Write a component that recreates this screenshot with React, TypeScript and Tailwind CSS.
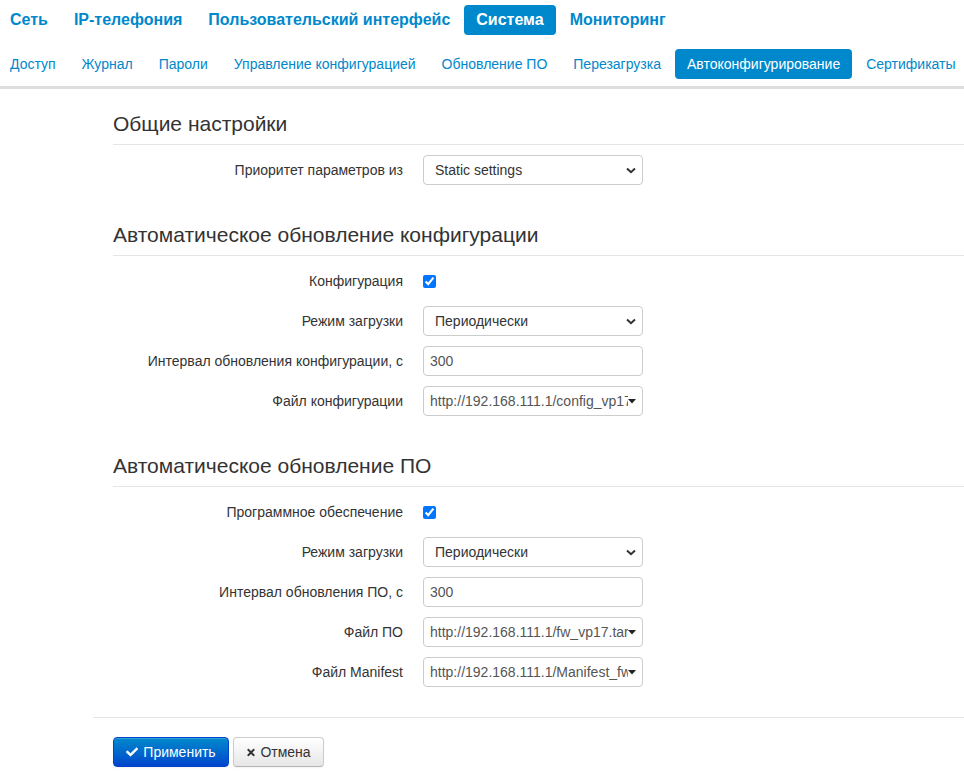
import { FaCheck, FaTimes } from "react-icons/fa";

const TOP_NAV = ["Сеть", "IP-телефония", "Пользовательский интерфейс", "Система", "Мониторинг"];
const SUB_NAV = [
  "Доступ",
  "Журнал",
  "Пароли",
  "Управление конфигурацией",
  "Обновление ПО",
  "Перезагрузка",
  "Автоконфигурирование",
  "Сертификаты",
];

function Legend({ children }: { children: React.ReactNode }) {
  return (
    <div className="h-[41px] leading-[40px] text-[21px] text-[#333] border-b border-[#e5e5e5] mb-[10px]">
      {children}
    </div>
  );
}

function Row({ label, children }: { label: string; children: React.ReactNode }) {
  return (
    <div className="flex items-center h-[30px] mb-[10px]">
      <label className="w-[310px] pr-[20px] text-right text-[14px] text-[#333] whitespace-nowrap">{label}</label>
      <div className="w-[220px] flex items-center">{children}</div>
    </div>
  );
}

function Select({ value }: { value: string }) {
  return (
    <div className="w-[220px] h-[30px] flex items-center border border-[#ccc] rounded-[4px] bg-white pl-[11px] pr-[6px] text-[14px] text-[#333]">
      <span className="flex-1">{value}</span>
      <svg width="10" height="7" viewBox="0 0 10 7" className="shrink-0">
        <polyline points="1,1.5 5,5.2 9,1.5" fill="none" stroke="#333" strokeWidth="2" />
      </svg>
    </div>
  );
}

function Combo({ value }: { value: string }) {
  return (
    <div className="w-[220px] h-[30px] flex items-center border border-[#ccc] rounded-[4px] bg-white pl-[6px] pr-[6px] text-[14px] text-[#555]">
      <span className="flex-1 overflow-hidden whitespace-nowrap">{value}</span>
      <svg width="8" height="5" viewBox="0 0 8 5" className="shrink-0">
        <polygon points="0,0 8,0 4,4.5" fill="#222" />
      </svg>
    </div>
  );
}

function TextInput({ value }: { value: string }) {
  return (
    <input
      defaultValue={value}
      className="w-[220px] h-[30px] border border-[#ccc] rounded-[4px] bg-white px-[6px] text-[14px] text-[#555] outline-none"
    />
  );
}

function Check() {
  return <input type="checkbox" defaultChecked className="m-0 w-[13px] h-[13px] accent-[#0075ff]" />;
}

export default function App() {
  return (
    <div className="min-h-screen bg-white font-['Liberation_Sans',Arial,sans-serif]">
      {/* Top menu */}
      <div className="pt-[5px]">
        <div className="flex gap-[2px] -ml-[2px]">
          {TOP_NAV.map((item) => (
            <a
              key={item}
              className={
                item === "Система"
                  ? "px-[12px] h-[30px] leading-[30px] text-[16px] font-bold rounded-[4px] bg-[#0088cc] text-white"
                  : "px-[12px] h-[30px] leading-[30px] text-[16px] font-bold text-[#0088cc]"
              }
            >
              {item}
            </a>
          ))}
        </div>
        <div className="flex gap-[2px] -ml-[2px] mt-[14px]">
          {SUB_NAV.map((item) => (
            <a
              key={item}
              className={
                item === "Автоконфигурирование"
                  ? "px-[12px] h-[30px] leading-[30px] text-[14px] rounded-[4px] bg-[#0088cc] text-white"
                  : "px-[12px] h-[30px] leading-[30px] text-[14px] text-[#0088cc] whitespace-nowrap"
              }
            >
              {item}
            </a>
          ))}
        </div>
        <div className="mt-[7px] h-[3px] bg-[#dddddd]" />
      </div>

      {/* Settings form */}
      <main className="pl-[93px] pt-[15px]">
        <div className="pl-[20px]">
          <Legend>Общие настройки</Legend>
          <Row label="Приоритет параметров из">
            <Select value="Static settings" />
          </Row>

          <div className="mt-[30px]">
            <Legend>Автоматическое обновление конфигурации</Legend>
            <Row label="Конфигурация">
              <Check />
            </Row>
            <Row label="Режим загрузки">
              <Select value="Периодически" />
            </Row>
            <Row label="Интервал обновления конфигурации, с">
              <TextInput value="300" />
            </Row>
            <Row label="Файл конфигурации">
              <Combo value="http://192.168.111.1/config_vp17.tar.gz" />
            </Row>
          </div>

          <div className="mt-[30px]">
            <Legend>Автоматическое обновление ПО</Legend>
            <Row label="Программное обеспечение">
              <Check />
            </Row>
            <Row label="Режим загрузки">
              <Select value="Периодически" />
            </Row>
            <Row label="Интервал обновления ПО, с">
              <TextInput value="300" />
            </Row>
            <Row label="Файл ПО">
              <Combo value="http://192.168.111.1/fw_vp17.tar.gz" />
            </Row>
            <Row label="Файл Manifest">
              <Combo value="http://192.168.111.1/Manifest_fw_vp17.json" />
            </Row>
          </div>
        </div>

        <div className="mt-[30px] border-t border-[#e5e5e5]" />

        <div className="pl-[20px] pt-[19px] flex gap-[4px]">
          <button className="h-[30px] w-[116px] flex items-center justify-center gap-[5px] rounded-[4px] border border-[#0044cc] bg-gradient-to-b from-[#0088cc] to-[#0044cc] text-white text-[14px] shadow-[inset_0_1px_0_rgba(255,255,255,0.2),0_1px_2px_rgba(0,0,0,0.05)]">
            <FaCheck className="w-[12px] h-[12px]" />
            Применить
          </button>
          <button className="h-[30px] w-[91px] flex items-center justify-center gap-[4px] rounded-[4px] border border-[#cccccc] border-b-[#b3b3b3] bg-gradient-to-b from-white to-[#e6e6e6] text-[#333] text-[14px] shadow-[inset_0_1px_0_rgba(255,255,255,0.2),0_1px_2px_rgba(0,0,0,0.05)]">
            <FaTimes className="w-[10px] h-[11px]" />
            Отмена
          </button>
        </div>
      </main>
    </div>
  );
}
